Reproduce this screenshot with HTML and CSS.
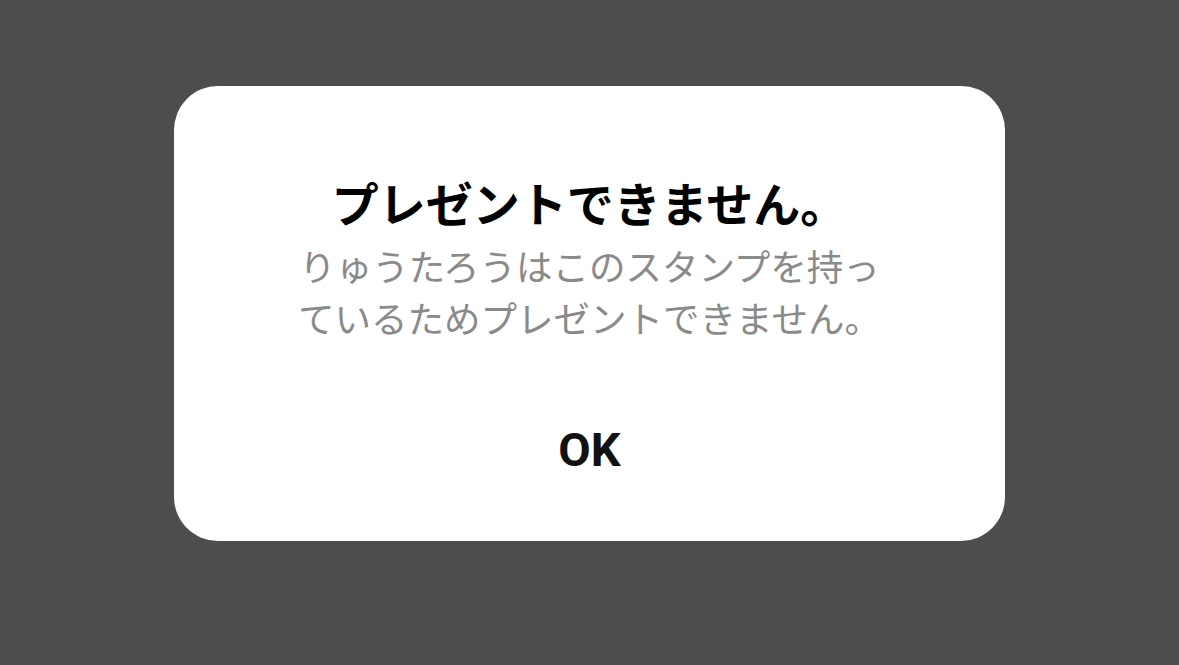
FILE: index.html
```html
<!DOCTYPE html>
<html lang="ja">
<head>
  <meta charset="UTF-8">
  <title>プレゼントできません</title>
  <link rel="stylesheet" href="styles.css">
</head>
<body>

  <div class="dialog">
    <h2 class="title">プレゼントできません。</h2>
    <p class="message">りゅうたろうはこのスタンプを持っているためプレゼントできません。</p>
    <button class="ok">OK</button>
  </div>

</body>
</html>
```

FILE: styles.css
```css
html, body { margin: 0; height: 100%; }
body { background: #4d4d4d; font-family: "Noto Sans CJK JP", "Noto Sans", sans-serif; display: flex; justify-content: center; align-items: flex-start; padding-top: 86px; box-sizing: border-box; }
.dialog { background: #fff; width: 831px; height: 455px; border-radius: 44px; box-sizing: border-box; padding: 88px 118px 0; display: flex; flex-direction: column; align-items: center; }
.title { margin: 0; font-size: 47px; line-height: 56px; font-weight: 700; color: #000; text-align: center; }
.message { margin: 10px 0 0; font-size: 36.5px; line-height: 52px; color: #8a8a8a; text-align: center; }
.ok { margin-top: 78px; background: none; border: none; padding: 0; font-family: Roboto, "Liberation Sans", sans-serif; font-weight: 700; font-size: 47px; line-height: 56px; color: #111; cursor: pointer; }
```
